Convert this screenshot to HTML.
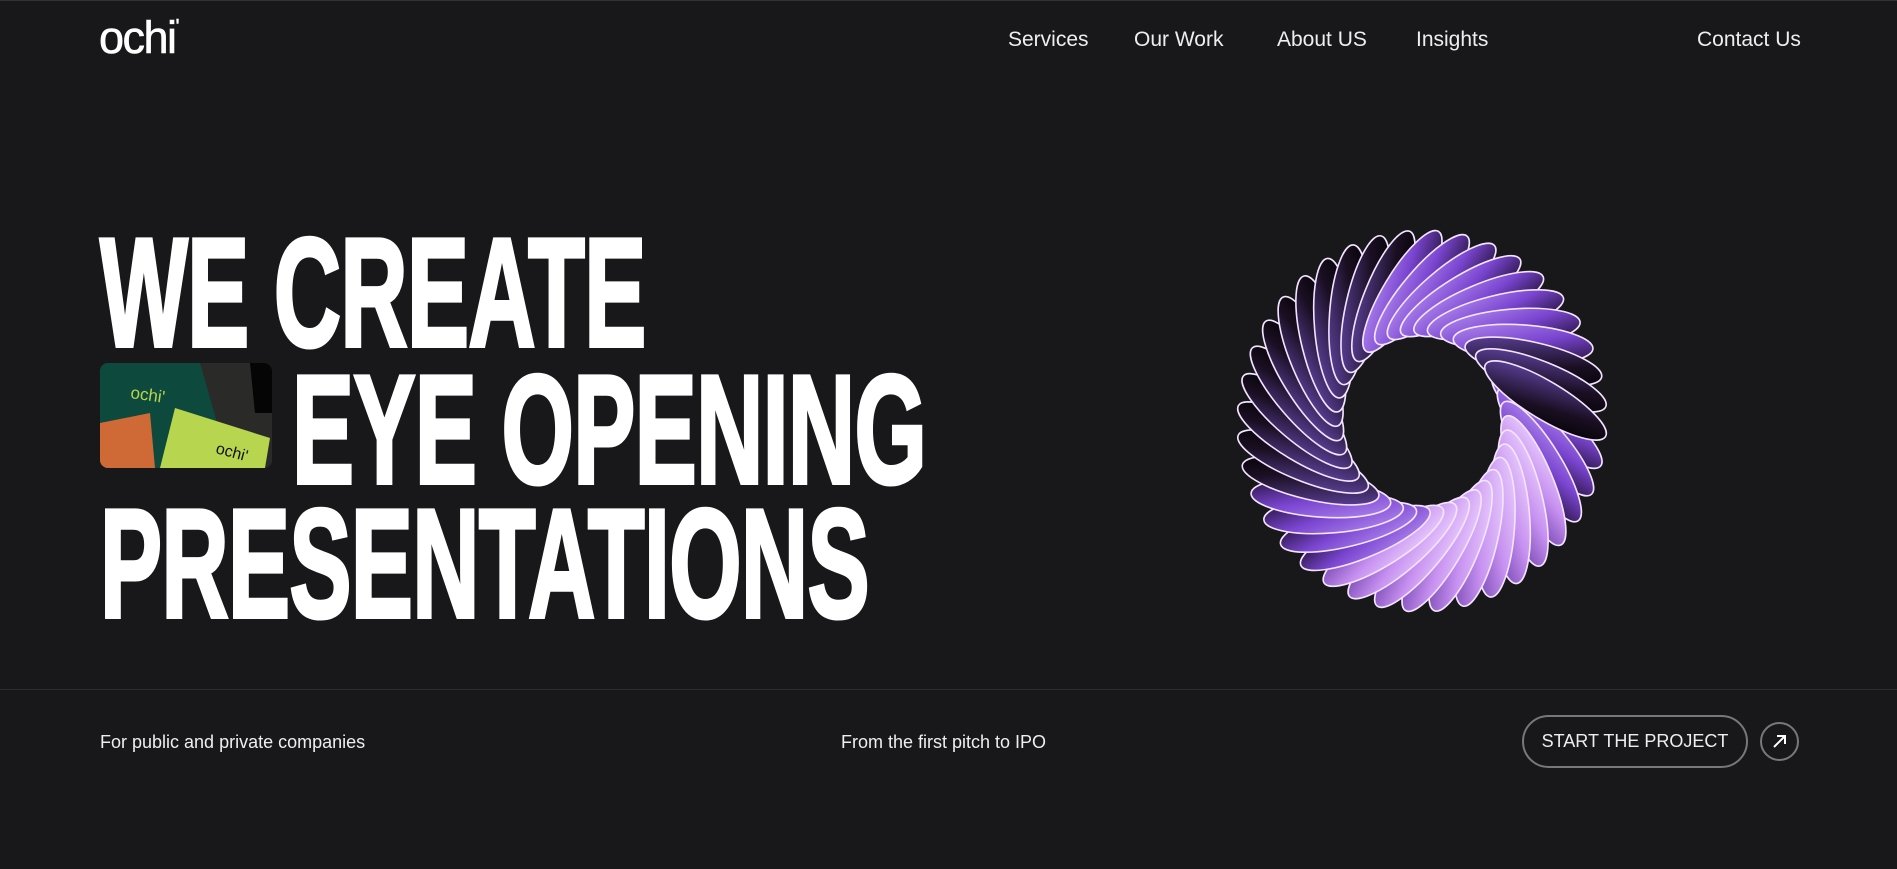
<!DOCTYPE html>
<html><head><meta charset="utf-8">
<style>
*{margin:0;padding:0;box-sizing:border-box}
html,body{width:1897px;height:869px;overflow:hidden;background:#18181a;color:#fff;font-family:"Liberation Sans",sans-serif}
.top{position:absolute;left:0;top:0;width:1897px;height:1px;background:#333}
.logo{position:absolute;left:99px;top:12px;font-size:45px;letter-spacing:-1.5px;font-weight:400;-webkit-text-stroke:0.6px #fff}
.nav{position:absolute;top:28px;font-size:21px;color:#eee}
.h{position:absolute;left:100px;font-weight:700;font-size:155px;line-height:1;transform:scaleX(0.6);transform-origin:left top;white-space:nowrap;letter-spacing:-1px;-webkit-text-stroke:4px #fff}
.img{position:absolute;left:100px;top:363px;width:172px;height:105px;border-radius:8px;overflow:hidden;background:#0f4a3c}
.line{position:absolute;left:0;top:689px;width:1897px;height:1px;background:#2c2c2e}
.b{position:absolute;top:732px;font-size:18px;color:#eee}
.btn{position:absolute;left:1522px;top:715px;width:226px;height:53px;border:2px solid #78787c;border-radius:27px;font-size:18px;display:flex;align-items:center;justify-content:center;color:#eee}
.circ{position:absolute;left:1760px;top:722px;width:39px;height:39px;border:2px solid #78787c;border-radius:50%}
</style></head><body>
<div class="top"></div>
<div class="logo">ochi<span style="font-size:20px;vertical-align:20px">'</span></div>
<div class="nav" style="left:1008px">Services</div>
<div class="nav" style="left:1134px">Our Work</div>
<div class="nav" style="left:1277px">About US</div>
<div class="nav" style="left:1416px">Insights</div>
<div class="nav" style="left:1697px">Contact Us</div>

<div class="h" style="top:215px">WE CREATE</div>
<div class="img">
<svg width="172" height="105" viewBox="0 0 172 105">
<rect width="172" height="105" fill="#0d4a3d"/>
<polygon points="100,0 172,0 172,105 130,105" fill="#2a2a28"/>
<polygon points="150,0 172,0 172,50 155,50" fill="#050505"/>
<polygon points="0,60 50,50 55,105 0,105" fill="#cf6935"/>
<polygon points="75,45 170,75 165,105 60,105" fill="#b7d54e"/>
<text x="30" y="35" fill="#b7d54e" font-size="17" font-family="Liberation Sans" transform="rotate(8 30 35)">ochi'</text>
<text x="115" y="90" fill="#111" font-size="16" font-family="Liberation Sans" transform="rotate(15 115 90)">ochi'</text>
</svg></div>
<div class="h" style="top:352px;left:292px">EYE OPENING</div>
<div class="h" style="top:486px">PRESENTATIONS</div>

<svg id="ring" style="position:absolute;left:1222px;top:211px" width="400" height="420" viewBox="-200 -210 400 420">
<defs>
<linearGradient id="g1" x1="0" y1="0" x2="1" y2="1"><stop offset="0" stop-color="#b48cf0"/><stop offset=".5" stop-color="#7a45d0"/><stop offset="1" stop-color="#1a0c28"/></linearGradient>
<linearGradient id="g2" x1="0" y1="0" x2="1" y2="1"><stop offset="0" stop-color="#f0d8ff"/><stop offset=".5" stop-color="#c690f0"/><stop offset="1" stop-color="#6a3aa8"/></linearGradient>
<linearGradient id="g3" x1="0" y1="0" x2="1" y2="1"><stop offset="0" stop-color="#6a4ab0"/><stop offset=".6" stop-color="#1a0f22"/><stop offset="1" stop-color="#000"/></linearGradient>
</defs>
<g id="petals"></g>
</svg>
<script>
var g=document.getElementById('petals'),s='';
var n=40;
for(var i=0;i<n;i++){
 var a=i/n*360, r=a*Math.PI/180;
 var R=125, x=Math.cos(r)*R, y=Math.sin(r)*R*1.05;
 var f=(a>20&&a<110)?'url(#g2)':((a>150&&a<260)||(a>330))?'url(#g3)':'url(#g1)';
 s+='<ellipse cx="'+x.toFixed(1)+'" cy="'+y.toFixed(1)+'" rx="70" ry="19" fill="'+f+'" stroke="#f3e4ff" stroke-width="1.6" transform="rotate('+(a+40).toFixed(1)+' '+x.toFixed(1)+' '+y.toFixed(1)+')"/>';
}
g.innerHTML=s;
</script>

<div class="line"></div>
<div class="b" style="left:100px">For public and private companies</div>
<div class="b" style="left:841px">From the first pitch to IPO</div>
<div class="btn">START THE PROJECT</div>
<div class="circ"><svg width="35" height="35" viewBox="0 0 35 35"><path d="M12 23 L23 12 M15 12 H23 V20" stroke="#fff" stroke-width="2" fill="none"/></svg></div>
</body></html>
